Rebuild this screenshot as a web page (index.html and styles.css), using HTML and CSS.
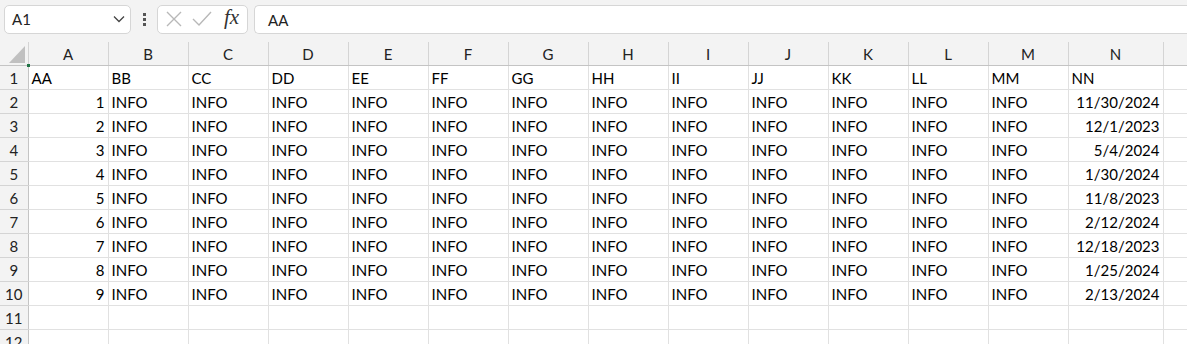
FILE: index.html
```html
<!DOCTYPE html>
<html lang="en">
<head>
<meta charset="UTF-8">
<title>Sheet</title>
<link rel="stylesheet" href="styles.css">
</head>
<body>
<div class="formula-bar">
  <div class="name-box">
    <span>A1</span>
    <svg width="12" height="8" viewBox="0 0 12 8"><polyline points="1,1.5 6,6.5 11,1.5" fill="none" stroke="#444" stroke-width="1.3"/></svg>
  </div>
  <div class="dots"><i></i><i></i><i></i></div>
  <div class="fx-buttons">
    <svg width="16" height="16" viewBox="0 0 16 16"><path d="M1 1 L15 15 M15 1 L1 15" stroke="#b8b8b8" stroke-width="1.4"/></svg>
    <svg width="20" height="16" viewBox="0 0 20 16"><polyline points="1,8 7,14 19,1" fill="none" stroke="#b8b8b8" stroke-width="1.4"/></svg>
    <span class="fx">fx</span>
  </div>
  <div class="formula-input">AA</div>
</div>

<table class="sheet">
  <colgroup>
    <col class="col-rh">
    <col><col><col><col><col><col><col><col><col><col><col><col><col>
    <col class="col-n">
    <col>
  </colgroup>
  <thead>
    <tr>
      <th class="corner"><span class="tri"></span></th>
      <th>A</th><th>B</th><th>C</th><th>D</th><th>E</th><th>F</th><th>G</th>
      <th>H</th><th>I</th><th>J</th><th>K</th><th>L</th><th>M</th><th>N</th><th></th>
    </tr>
  </thead>
  <tbody id="rows"></tbody>
</table>

<script>
const dates = ["11/30/2024","12/1/2023","5/4/2024","1/30/2024","11/8/2023","2/12/2024","12/18/2023","1/25/2024","2/13/2024"];
const heads = ["AA","BB","CC","DD","EE","FF","GG","HH","II","JJ","KK","LL","MM","NN"];
const body = document.getElementById("rows");
let html = "<tr><th>1</th>" + heads.map(h => "<td>" + h + "</td>").join("") + "<td></td></tr>";
dates.forEach((d, i) => {
  html += "<tr><th>" + (i + 2) + "</th><td class='num'>" + (i + 1) + "</td>";
  for (let c = 0; c < 12; c++) html += "<td>INFO</td>";
  html += "<td class='num'>" + d + "</td><td></td></tr>";
});
html += "<tr><th>11</th>" + "<td></td>".repeat(15) + "</tr>";
html += "<tr><th>12</th>" + "<td></td>".repeat(15) + "</tr>";
body.innerHTML = html;
</script>
</body>
</html>
```

FILE: styles.css
```css
body {
  margin: 0;
  background: #ffffff;
  font-family: Lato, "Liberation Sans", sans-serif;
  overflow: hidden;
  width: 1187px;
  height: 344px;
}
.formula-bar {
  display: flex;
  align-items: center;
  height: 42px;
  padding: 0 0 4px 4px;
  box-sizing: border-box;
  background: #f3f3f3;
}
.name-box {
  display: flex;
  align-items: center;
  justify-content: space-between;
  width: 127px;
  height: 29px;
  box-sizing: border-box;
  padding: 0 5px 0 7px;
  background: #fff;
  border: 1px solid #d6d6d6;
  border-radius: 5px;
  font-size: 15px;
  color: #222;
}
.dots {
  display: flex;
  flex-direction: column;
  gap: 2px;
  margin: 0 11px 0 12px;
}
.dots i {
  display: block;
  width: 3px;
  height: 3px;
  background: #555;
}
.fx-buttons {
  display: flex;
  align-items: center;
  width: 91px;
  height: 29px;
  box-sizing: border-box;
  padding: 0 6px 0 8px;
  gap: 10px;
  background: #fff;
  border: 1px solid #d6d6d6;
  border-radius: 5px;
}
.fx {
  font-family: "Liberation Serif", serif;
  font-style: italic;
  font-size: 21px;
  color: #333;
  margin-left: 2px;
  line-height: 1;
  padding-bottom: 3px;
}
.formula-input {
  flex: 1;
  height: 29px;
  box-sizing: border-box;
  margin-left: 6px;
  padding: 5px 0 0 13px;
  background: #fff;
  border: 1px solid #d6d6d6;
  border-right: none;
  border-radius: 5px 0 0 5px;
  font-size: 15px;
  color: #222;
}
.sheet {
  border-collapse: collapse;
  table-layout: fixed;
  width: 1243px;
  font-size: 15px;
  color: #000;
}
.sheet col { width: 80px; }
.sheet col.col-rh { width: 28px; }
.sheet col.col-n { width: 95px; }
.sheet thead th {
  height: 23px;
  padding: 0;
  background: #f3f3f3;
  font-weight: normal;
  color: #222;
  border-bottom: 1px solid #c4c4c4;
  border-left: 1px solid #d4d4d4;
  text-align: center;
}
.sheet thead th.corner {
  position: relative;
  border-left: none;
  border-right: 1px solid #d4d4d4;
}
.tri {
  position: absolute;
  right: 3px;
  bottom: 2px;
  width: 0;
  height: 0;
  border-left: 16px solid transparent;
  border-bottom: 17px solid #c0c0c0;
}
.corner::after {
  content: "";
  position: absolute;
  right: -2px;
  bottom: -2px;
  width: 3px;
  height: 3px;
  background: #217346;
}
.sheet tbody th {
  height: 23px;
  padding: 0;
  background: #f3f3f3;
  font-weight: normal;
  color: #222;
  border-bottom: 1px solid #d4d4d4;
  border-right: 1px solid #c4c4c4;
  text-align: center;
}
.sheet td {
  height: 23px;
  padding: 0 3px;
  border: 1px solid #e1e1e1;
  border-top: none;
  white-space: nowrap;
  overflow: hidden;
}
.sheet td.num {
  text-align: right;
}
```
